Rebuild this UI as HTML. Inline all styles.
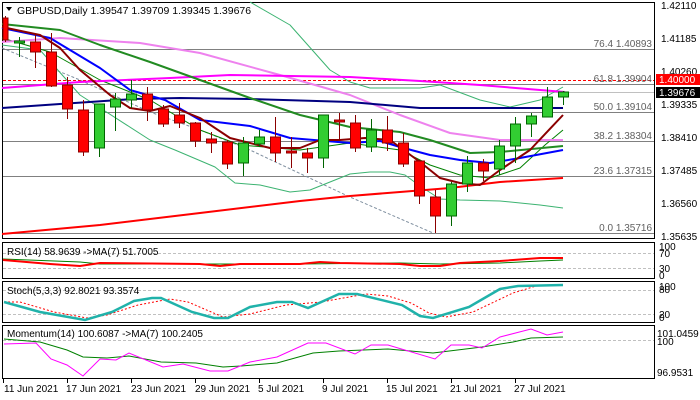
<!DOCTYPE html>
<html><head><meta charset="utf-8"><style>
html,body{margin:0;padding:0;background:#fff;}
svg{display:block;font-family:"Liberation Sans",sans-serif;}
</style></head><body>
<svg width="700" height="400" viewBox="0 0 700 400" xmlns="http://www.w3.org/2000/svg">
<rect width="700" height="400" fill="#fff"/>
<g fill="none" stroke="#000" stroke-width="1">
<rect x="2.5" y="2.5" width="652" height="236"/>
<rect x="2.5" y="242.5" width="652" height="36"/>
<rect x="2.5" y="281.5" width="652" height="41"/>
<rect x="2.5" y="325.5" width="652" height="53"/>
</g>
<g stroke="#808080" stroke-width="1">
<line x1="3" y1="49.5" x2="654" y2="49.5"/>
<line x1="3" y1="84.5" x2="654" y2="84.5"/>
<line x1="3" y1="112.5" x2="654" y2="112.5"/>
<line x1="3" y1="141.5" x2="654" y2="141.5"/>
<line x1="3" y1="176.5" x2="654" y2="176.5"/>
<line x1="3" y1="233.5" x2="654" y2="233.5"/>
</g>
<line x1="3" y1="92.5" x2="654" y2="92.5" stroke="#c0c0c0"/>
<line x1="3" y1="80.5" x2="654" y2="80.5" stroke="#f00" stroke-dasharray="3,2"/>
<g font-size="10" fill="#606060" text-anchor="end">
<text x="652" y="47">76.4 1.40893</text>
<text x="652" y="82">61.8 1.39904</text>
<text x="652" y="110">50.0 1.39104</text>
<text x="652" y="139">38.2 1.38304</text>
<text x="652" y="174">23.6 1.37315</text>
<text x="652" y="231">0.0 1.35716</text>
</g>
<polyline fill="none" stroke="#8090a0" stroke-dasharray="3,2" points="2,48 80,80 150,112 200,130 250,150 350,197 433,233"/>
<g fill="none" stroke-linejoin="round">
<polyline stroke="#3cb371" stroke-width="1" points="250,2 290,25 330,70 350,82 370,88 420,88 440,85 480,100 510,107 540,100 563,87"/>
<polyline stroke="#3cb371" stroke-width="1" points="2,45 40,50 80,95 150,140 175,150 215,167 235,183 260,185 290,192 310,190 330,182 350,174 370,172 390,172 405,175 420,186 440,199 460,200 500,201 540,205 563,208"/>
<polyline stroke="#008000" stroke-width="1" points="2,38 50,52 100,80 150,100 200,130 240,145 300,150 350,143 400,150 430,165 460,175 490,178 520,168 545,145 563,130"/>
<polyline stroke="#ee82ee" stroke-width="2" points="2,42 60,38 140,43 200,53 280,75 350,95 400,115 450,133 500,140 563,140"/>
<polyline stroke="#ff00ff" stroke-width="2" points="2,88 80,82 170,78 230,75 350,77 420,81 480,85 540,90 565,92"/>
<polyline stroke="#000080" stroke-width="2" points="2,108 60,104 133,99 180,98 250,99 350,102 420,108 563,108"/>
<polyline stroke="#228b22" stroke-width="2" points="2,24 60,30 100,45 150,62 200,80 250,98 300,115 350,127 400,132 430,140 470,153 500,152 563,146"/>
<polyline stroke="#0000ff" stroke-width="2" points="2,28 50,38 100,68 130,90 165,100 200,120 250,126 290,138 350,143 380,141 400,147 430,155 460,160 490,163 520,158 563,150"/>
<polyline stroke="#f00" stroke-width="2" points="2,234 100,225 200,213 300,201 350,196 400,192 450,188 500,182 563,178"/>
<polyline stroke="#8b0000" stroke-width="2" points="2,27 40,35 60,48 80,70 110,95 130,108 150,111 170,106 200,118 230,138 270,148 300,148 320,140 340,140 365,138 390,140 420,162 440,178 460,183 480,185 500,170 530,150 563,115"/>
</g>
<g stroke-width="1">
<g stroke="#8b0000" fill="#f00">
<line x1="5.5" y1="16" x2="5.5" y2="42"/><rect x="3" y="18" width="5" height="22"/>
<line x1="35.5" y1="35" x2="35.5" y2="68"/><rect x="30.5" y="42" width="10" height="10"/>
<line x1="51.5" y1="33" x2="51.5" y2="87"/><rect x="46.5" y="52" width="10" height="34"/>
<line x1="67.5" y1="77" x2="67.5" y2="119"/><rect x="62.5" y="85" width="10" height="24"/>
<line x1="83.5" y1="100" x2="83.5" y2="156"/><rect x="78.5" y="110" width="10" height="42"/>
<line x1="147.5" y1="87" x2="147.5" y2="121"/><rect x="142.5" y="94" width="10" height="16"/>
<line x1="163.5" y1="105" x2="163.5" y2="127"/><rect x="158.5" y="109" width="10" height="15"/>
<line x1="179.5" y1="103" x2="179.5" y2="128"/><rect x="174.5" y="115" width="10" height="8"/>
<line x1="195.5" y1="122" x2="195.5" y2="147"/><rect x="190.5" y="123" width="10" height="18"/>
<line x1="211.5" y1="132" x2="211.5" y2="153"/><rect x="206.5" y="139" width="10" height="4"/>
<line x1="227.5" y1="140" x2="227.5" y2="169"/><rect x="222.5" y="142" width="10" height="22"/>
<line x1="275.5" y1="117" x2="275.5" y2="162"/><rect x="270.5" y="137" width="10" height="16"/>
<line x1="291.5" y1="137" x2="291.5" y2="168"/><rect x="286.5" y="151" width="10" height="2"/>
<line x1="307.5" y1="148" x2="307.5" y2="173"/><rect x="302.5" y="153" width="10" height="5"/>
<line x1="339.5" y1="113" x2="339.5" y2="139"/><rect x="334.5" y="120" width="10" height="2"/>
<line x1="355.5" y1="115" x2="355.5" y2="152"/><rect x="350.5" y="123" width="10" height="25"/>
<line x1="387.5" y1="116" x2="387.5" y2="151"/><rect x="382.5" y="130" width="10" height="13"/>
<line x1="403.5" y1="133" x2="403.5" y2="167"/><rect x="398.5" y="143" width="10" height="21"/>
<line x1="419.5" y1="160" x2="419.5" y2="204"/><rect x="414.5" y="161" width="10" height="35"/>
<line x1="435.5" y1="190" x2="435.5" y2="233"/><rect x="430.5" y="197" width="10" height="19"/>
<line x1="483.5" y1="159" x2="483.5" y2="181"/><rect x="478.5" y="163" width="10" height="8"/>
</g>
<g stroke="#006400" fill="#32cd32">
<line x1="19.5" y1="37" x2="19.5" y2="57"/><rect x="14.5" y="41" width="10" height="2"/>
<line x1="99.5" y1="104" x2="99.5" y2="157"/><rect x="94.5" y="104" width="10" height="44"/>
<line x1="115.5" y1="93" x2="115.5" y2="131"/><rect x="110.5" y="99" width="10" height="8"/>
<line x1="131.5" y1="80" x2="131.5" y2="108"/><rect x="126.5" y="94" width="10" height="6"/>
<line x1="243.5" y1="137" x2="243.5" y2="176"/><rect x="238.5" y="143" width="10" height="20"/>
<line x1="259.5" y1="130" x2="259.5" y2="147"/><rect x="254.5" y="137" width="10" height="7"/>
<line x1="323.5" y1="115" x2="323.5" y2="168"/><rect x="318.5" y="115" width="10" height="43"/>
<line x1="371.5" y1="119" x2="371.5" y2="152"/><rect x="366.5" y="130" width="10" height="17"/>
<line x1="451.5" y1="182" x2="451.5" y2="226"/><rect x="446.5" y="184" width="10" height="32"/>
<line x1="467.5" y1="156" x2="467.5" y2="192"/><rect x="462.5" y="163" width="10" height="21"/>
<line x1="499.5" y1="140" x2="499.5" y2="175"/><rect x="494.5" y="146" width="10" height="23"/>
<line x1="515.5" y1="117" x2="515.5" y2="163"/><rect x="510.5" y="124" width="10" height="22"/>
<line x1="531.5" y1="113" x2="531.5" y2="137"/><rect x="526.5" y="116" width="10" height="8"/>
<line x1="547.5" y1="87" x2="547.5" y2="117"/><rect x="542.5" y="97" width="10" height="20"/>
<line x1="563.5" y1="91" x2="563.5" y2="105"/><rect x="558.5" y="92" width="10" height="5"/>
</g>
</g>
<polygon points="6,7 12,7 9,11" fill="#000"/>
<text x="17" y="14" font-size="10.5" fill="#000">GBPUSD,Daily  1.39547 1.39709 1.39345 1.39676</text>
<g font-size="10" fill="#000">
<text x="661" y="9">1.42110</text>
<text x="661" y="42">1.41185</text>
<text x="661" y="75">1.40260</text>
<text x="661" y="108">1.39335</text>
<text x="661" y="141">1.38410</text>
<text x="661" y="174">1.37485</text>
<text x="661" y="207">1.36560</text>
<text x="661" y="240">1.35635</text>
</g>
<rect x="656" y="74" width="44" height="11" fill="#f00"/>
<text x="659" y="83" font-size="10" fill="#fff">1.40000</text>
<rect x="656" y="87" width="44" height="11" fill="#000"/>
<text x="659" y="96" font-size="10" fill="#fff">1.39676</text>
<g stroke="#c0c0c0" stroke-dasharray="3,2">
<line x1="3" y1="253.5" x2="654" y2="253.5"/>
<line x1="3" y1="268.5" x2="654" y2="268.5"/>
<line x1="3" y1="290.5" x2="654" y2="290.5"/>
<line x1="3" y1="314.5" x2="654" y2="314.5"/>
<line x1="3" y1="340.5" x2="654" y2="340.5"/>
</g>
<polyline fill="none" stroke="#008000" stroke-width="1" points="3,259 80,262 100,264 200,264 300,264 400,263 440,264 500,263 540,261 563,260"/>
<polyline fill="none" stroke="#f00" stroke-width="2" points="3,260 50,264 80,266 100,263 200,264 220,266 240,264 300,264 320,262 340,263 400,264 420,266 440,266 460,263 500,261 540,258 563,258"/>
<text x="7" y="255" font-size="10" fill="#000">RSI(14) 58.9639  -&gt;MA(7) 51.7005</text>
<polyline fill="none" stroke="#f00" stroke-width="1" stroke-dasharray="2,2" points="4,302 20,302 54,312 87,318 107,315 138,305 170,299 188,302 223,317 250,314 286,305 321,302 366,294 388,296 411,303 429,313 446,317 473,312 513,293 536,286 563,285"/>
<polyline fill="none" stroke="#20b2aa" stroke-width="2.5" points="4,302 40,312 85,320 112,312 134,301 152,298 161,298 192,312 214,318 228,318 250,307 277,302 292,302 308,308 339,294 357,294 402,305 420,316 433,318 469,307 500,289 518,286 563,285"/>
<text x="7" y="294" font-size="10" fill="#000">Stoch(5,3,3) 92.8021 93.3574</text>
<polyline fill="none" stroke="#008000" stroke-width="1" points="4,339 40,342 67,350 83,357 107,358 129,356 161,362 196,363 223,367 241,366 277,363 313,353 339,351 388,349 433,353 482,347 513,342 531,338 563,337"/>
<polyline fill="none" stroke="#ff00ff" stroke-width="1" points="4,344 36,343 51,359 67,365 83,376 100,359 116,360 129,353 163,367 183,364 210,371 228,371 250,362 277,357 308,343 326,343 355,354 371,345 388,345 435,359 451,345 469,345 482,348 500,337 531,329 547,335 563,332"/>
<text x="7" y="337" font-size="10" fill="#000">Momentum(14) 100.6087  -&gt;MA(7) 100.2405</text>
<g font-size="10" fill="#000">
<text x="659" y="250">100</text><text x="659" y="257">70</text>
<text x="659" y="272">30</text><text x="659" y="279">0</text>
<text x="659" y="290">100</text><text x="659" y="293">80</text>
<text x="659" y="318">20</text><text x="659" y="321">0</text>
<text x="657" y="337">101.0459</text><text x="657" y="345">100</text>
<text x="657" y="376">96.9531</text>
</g>
<g font-size="10" fill="#000">
<text x="4" y="392">11 Jun 2021</text>
<text x="66" y="392">17 Jun 2021</text>
<text x="131" y="392">23 Jun 2021</text>
<text x="195" y="392">29 Jun 2021</text>
<text x="258" y="392">5 Jul 2021</text>
<text x="322" y="392">9 Jul 2021</text>
<text x="386" y="392">15 Jul 2021</text>
<text x="450" y="392">21 Jul 2021</text>
<text x="514" y="392">27 Jul 2021</text>
</g>
<g stroke="#000">
<line x1="3.5" y1="379" x2="3.5" y2="383"/><line x1="67.5" y1="379" x2="67.5" y2="383"/>
<line x1="131.5" y1="379" x2="131.5" y2="383"/><line x1="195.5" y1="379" x2="195.5" y2="383"/>
<line x1="259.5" y1="379" x2="259.5" y2="383"/><line x1="323.5" y1="379" x2="323.5" y2="383"/>
<line x1="387.5" y1="379" x2="387.5" y2="383"/><line x1="451.5" y1="379" x2="451.5" y2="383"/>
<line x1="515.5" y1="379" x2="515.5" y2="383"/>
</g>
</svg>
</body></html>
